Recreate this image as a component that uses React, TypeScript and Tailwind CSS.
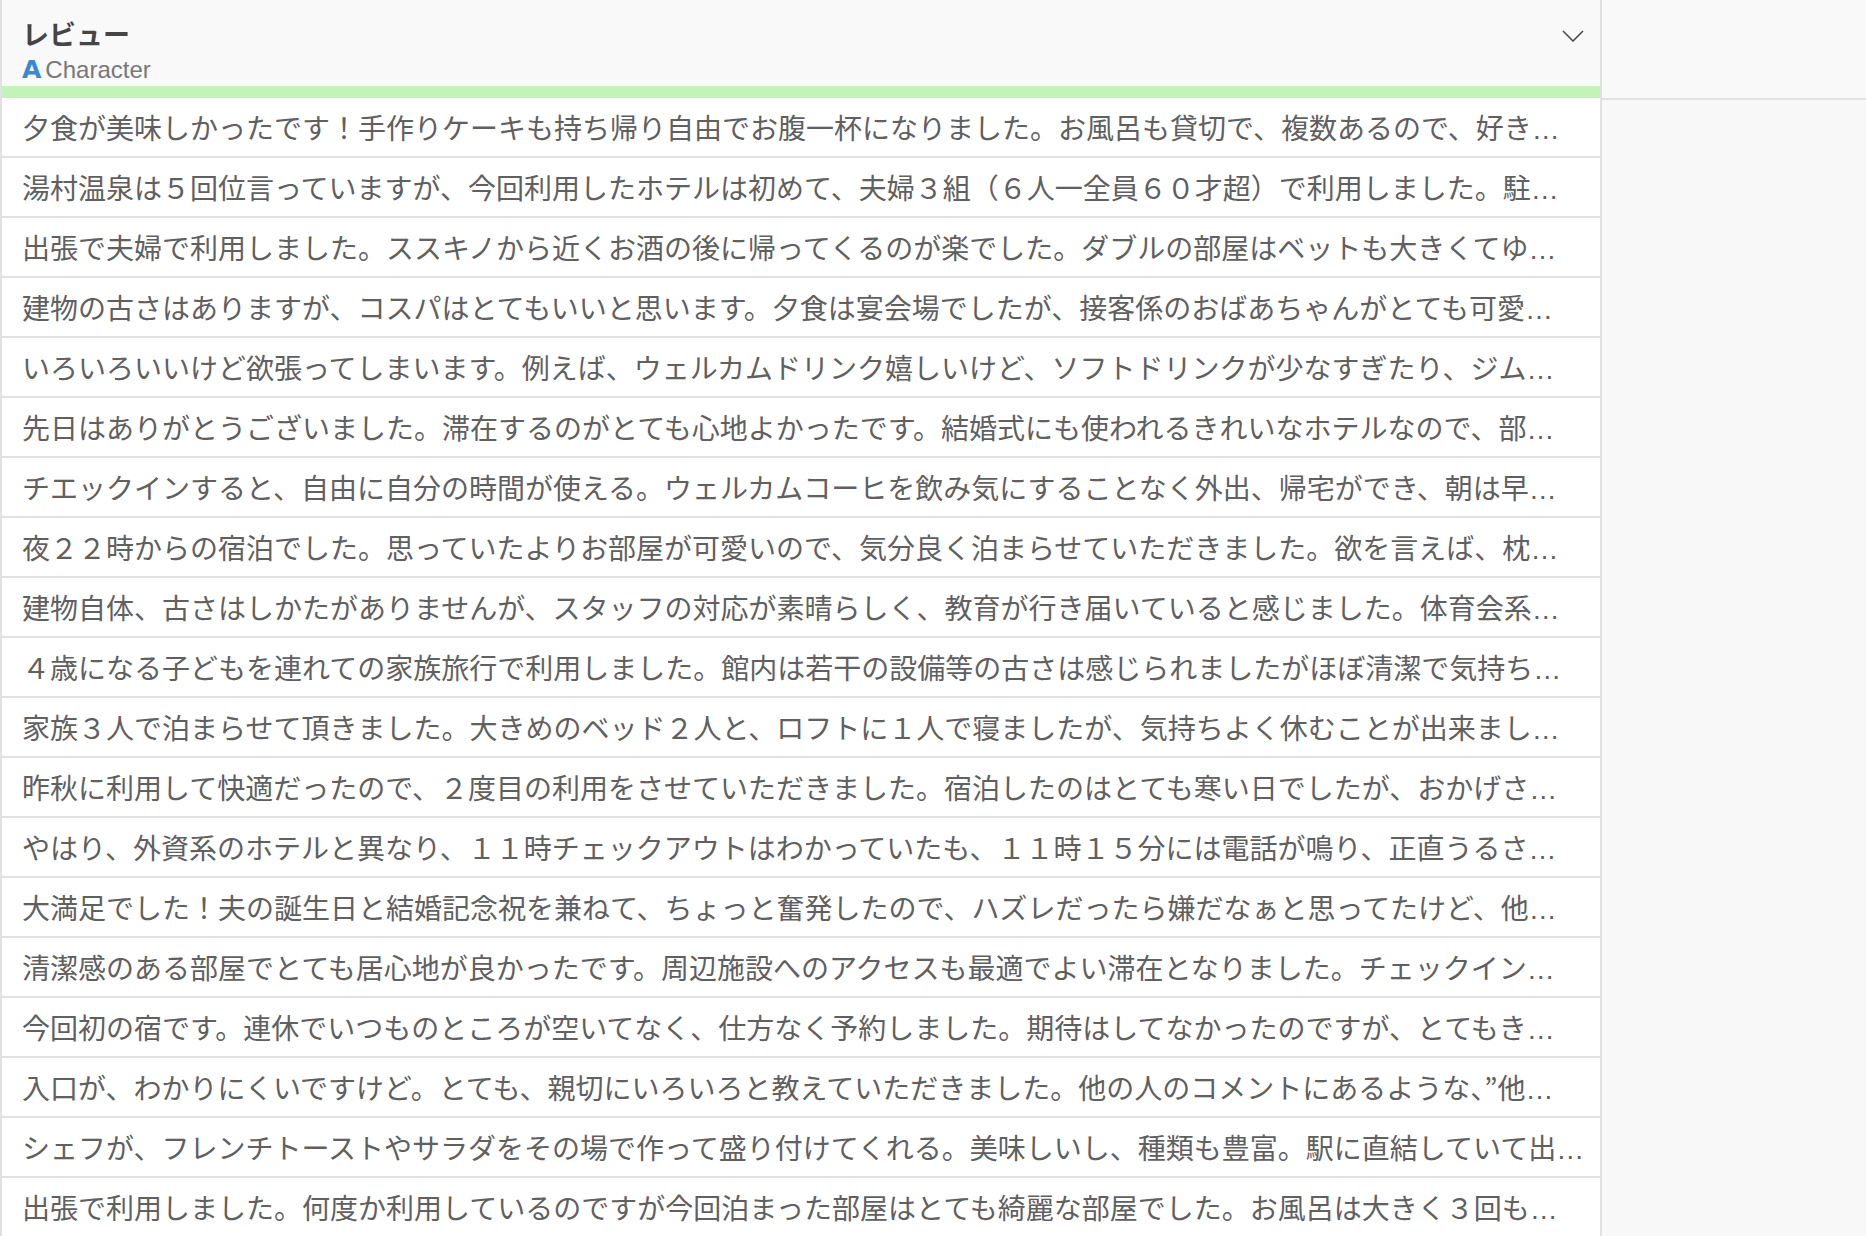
import React from 'react';

// visible part of each review, already cut to the column width
const reviews: string[] = [
  '夕食が美味しかったです！手作りケーキも持ち帰り自由でお腹一杯になりました。お風呂も貸切で、複数あるので、好き',
  '湯村温泉は５回位言っていますが、今回利用したホテルは初めて、夫婦３組（６人一全員６０才超）で利用しました。駐',
  '出張で夫婦で利用しました。ススキノから近くお酒の後に帰ってくるのが楽でした。ダブルの部屋はベットも大きくてゆ',
  '建物の古さはありますが、コスパはとてもいいと思います。夕食は宴会場でしたが、接客係のおばあちゃんがとても可愛',
  'いろいろいいけど欲張ってしまいます。例えば、ウェルカムドリンク嬉しいけど、ソフトドリンクが少なすぎたり、ジム',
  '先日はありがとうございました。滞在するのがとても心地よかったです。結婚式にも使われるきれいなホテルなので、部',
  'チエックインすると、自由に自分の時間が使える。ウェルカムコーヒを飲み気にすることなく外出、帰宅ができ、朝は早',
  '夜２２時からの宿泊でした。思っていたよりお部屋が可愛いので、気分良く泊まらせていただきました。欲を言えば、枕',
  '建物自体、古さはしかたがありませんが、スタッフの対応が素晴らしく、教育が行き届いていると感じました。体育会系',
  '４歳になる子どもを連れての家族旅行で利用しました。館内は若干の設備等の古さは感じられましたがほぼ清潔で気持ち',
  '家族３人で泊まらせて頂きました。大きめのベッド２人と、ロフトに１人で寝ましたが、気持ちよく休むことが出来まし',
  '昨秋に利用して快適だったので、２度目の利用をさせていただきました。宿泊したのはとても寒い日でしたが、おかげさ',
  'やはり、外資系のホテルと異なり、１１時チェックアウトはわかっていたも、１１時１５分には電話が鳴り、正直うるさ',
  '大満足でした！夫の誕生日と結婚記念祝を兼ねて、ちょっと奮発したので、ハズレだったら嫌だなぁと思ってたけど、他',
  '清潔感のある部屋でとても居心地が良かったです。周辺施設へのアクセスも最適でよい滞在となりました。チェックイン',
  '今回初の宿です。連休でいつものところが空いてなく、仕方なく予約しました。期待はしてなかったのですが、とてもき',
  '入口が、わかりにくいですけど。とても、親切にいろいろと教えていただきました。他の人のコメントにあるような、”他',
  'シェフが、フレンチトーストやサラダをその場で作って盛り付けてくれる。美味しいし、種類も豊富。駅に直結していて出',
  '出張で利用しました。何度か利用しているのですが今回泊まった部屋はとても綺麗な部屋でした。お風呂は大きく３回も',
];

const App: React.FC = () => {
  return (
    <div className="flex h-[1236px] w-full overflow-hidden bg-[#f8f8f8]">
      {/* Column */}
      <div className="flex w-[1602px] shrink-0 flex-col border-x-2 border-[#e1e1e1] bg-white">
        {/* Column header */}
        <div className="bg-[#f9f9f9]">
          <div className="relative pl-[20px] pr-[18px] pt-[18px] pb-[2px]">
            <div className="h-[32px] font-['Noto_Sans_CJK_JP',sans-serif] text-[27px] font-bold leading-[32px] text-[#454545]">
              レビュー
            </div>
            <div className="mt-[6px] flex h-[28px] items-center gap-[4px]">
              <span className="font-['DejaVu_Sans',sans-serif] text-[25px] font-bold leading-[28px] text-[#3a87d4]">A</span>
              <span className="font-['Liberation_Sans',sans-serif] text-[24px] leading-[28px] text-[#787878]">Character</span>
            </div>
            <button className="absolute right-[16px] top-[30px] text-[#444444]">
              <svg width="22" height="12" viewBox="0 0 22 12" fill="none" stroke="currentColor" strokeWidth="1.5">
                <polyline points="1,1 11,11 21,1" />
              </svg>
            </button>
          </div>
          <div className="h-[12px] bg-[#c4f3b9]" />
        </div>
        <div className="h-[2px] bg-[#e1e1e1]" />

        {/* Rows */}
        <ul className="flex flex-col">
          {reviews.map((text, i) => (
            <li
              key={i}
              className="flex h-[60px] shrink-0 items-center overflow-hidden border-b-2 border-[#e1e1e1] pt-[2px] pl-[20px] pr-[16px]"
            >
              <span className="whitespace-nowrap font-['Noto_Sans_CJK_JP',sans-serif] text-[28px] leading-[28px] text-[#606060]">
                {text}
                <span className="font-['Liberation_Sans',sans-serif]">…</span>
              </span>
            </li>
          ))}
        </ul>
      </div>

      {/* Empty area to the right */}
      <div className="flex flex-1 flex-col">
        <div className="h-[98px] bg-[#f9f9f9]" />
        <div className="h-[2px] bg-[#e1e1e1]" />
        <div className="flex-1 bg-[#f8f8f8]" />
      </div>
    </div>
  );
};

export default App;
